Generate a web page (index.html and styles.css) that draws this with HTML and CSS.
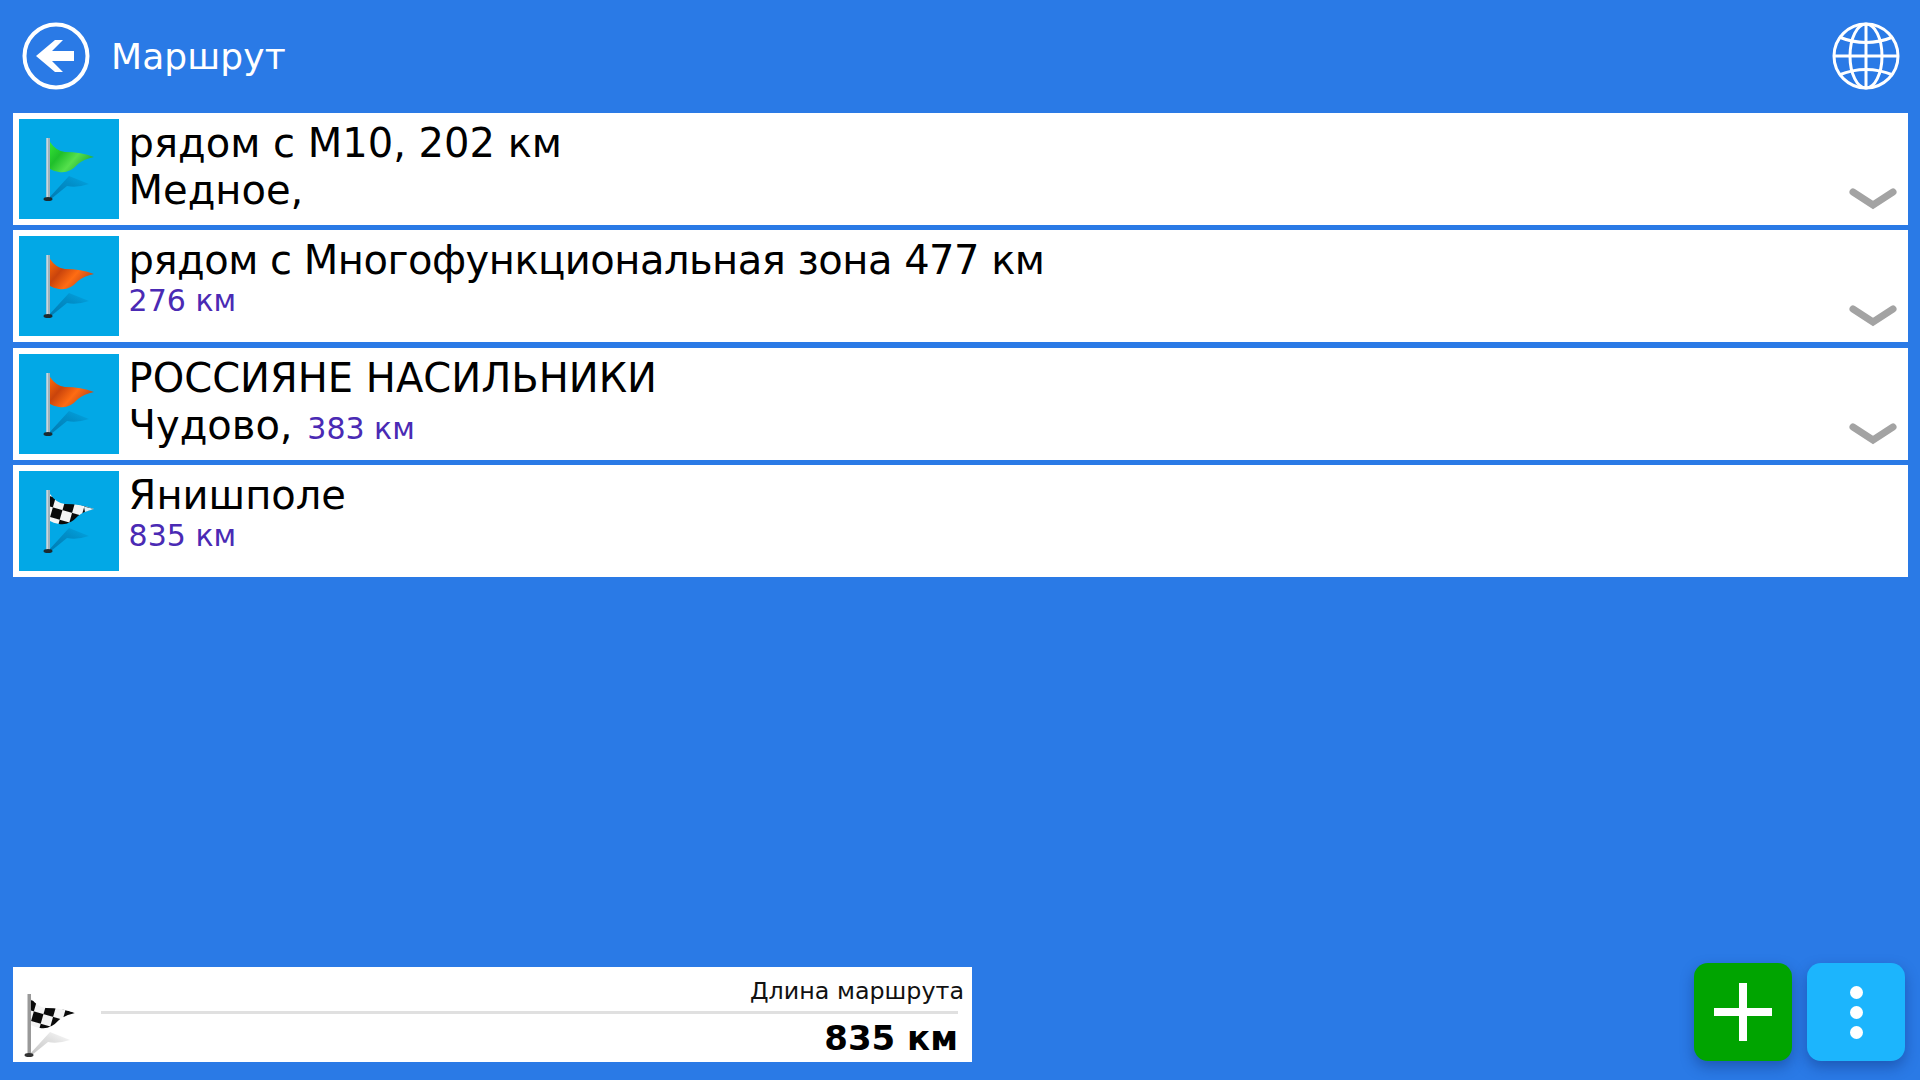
FILE: index.html
```html
<!DOCTYPE html>
<html lang="ru">
<head>
<meta charset="utf-8">
<title>Маршрут</title>
<link rel="stylesheet" href="styles.css">
</head>
<body>
<svg class="defs" width="0" height="0">
  <defs>
    <linearGradient id="gGreen" x1="0" y1="0" x2="1" y2="0.6">
      <stop offset="0" stop-color="#35e635"/><stop offset="0.35" stop-color="#1fbf2a"/><stop offset="0.65" stop-color="#55e04c"/><stop offset="1" stop-color="#1fa838"/>
    </linearGradient>
    <linearGradient id="gOrange" x1="0" y1="0" x2="1" y2="0.6">
      <stop offset="0" stop-color="#ff6a08"/><stop offset="0.35" stop-color="#c9440c"/><stop offset="0.65" stop-color="#ff6c12"/><stop offset="1" stop-color="#b8451c"/>
    </linearGradient>
    <pattern id="pCheck" width="20" height="20" patternUnits="userSpaceOnUse" patternTransform="translate(27 24) rotate(16)">
      <rect width="20" height="20" fill="#f4f4f4"/>
      <rect width="10" height="10" fill="#0a0a0a"/>
      <rect x="10" y="10" width="10" height="10" fill="#0a0a0a"/>
    </pattern>
    <linearGradient id="gShadow" x1="0" y1="1" x2="1" y2="0">
      <stop offset="0" stop-color="#00689c" stop-opacity="0.7"/><stop offset="0.6" stop-color="#00689c" stop-opacity="0.4"/><stop offset="1" stop-color="#00689c" stop-opacity="0.02"/>
    </linearGradient>
    <linearGradient id="gShadowGrey" x1="0" y1="1" x2="1" y2="0">
      <stop offset="0" stop-color="#aaa" stop-opacity="0.7"/><stop offset="0.6" stop-color="#bbb" stop-opacity="0.45"/><stop offset="1" stop-color="#bbb" stop-opacity="0.02"/>
    </linearGradient>
    <symbol id="pole" viewBox="0 0 100 100">
      <rect x="27.500" y="19" width="3.500" height="61" fill="#9fb2bd"/>
      <rect x="27.500" y="19" width="1.200" height="61" fill="#dfe6ea"/>
      <ellipse cx="29" cy="80" rx="4.500" ry="2" fill="#1c2a30"/>
    </symbol>
  </defs>
</svg>

<div class="app">
  <header class="topbar">
    <div class="title-group">
      <svg class="back-icon" viewBox="0 0 68 68">
        <circle cx="34" cy="34" r="31.500" fill="none" stroke="#fff" stroke-width="4"/>
        <path d="M14 34 L33 18 L41 18 L30 29 L52 29 L52 39 L30 39 L41 50 L33 50 Z" fill="#fff"/>
      </svg>
      <span class="title">Маршрут</span>
    </div>
    <svg class="globe-icon" viewBox="0 0 68 68" fill="none" stroke="#fff" stroke-width="3">
      <circle cx="34" cy="34" r="32"/>
      <ellipse cx="34" cy="34" rx="16" ry="32"/>
      <path d="M34 2V66M2 34H66"/>
      <path d="M7 15Q34 26 61 15M7 53Q34 42 61 53"/>
    </svg>
  </header>

  <main class="route-list">
    <article class="route-row">
      <div class="tile">
        <svg class="flag" viewBox="0 0 100 100">
          <path d="M29 80 L50 57 Q60 61 70 65 Q58 69 48 67 L32 80Z" fill="url(#gShadow)"/>
          <use href="#pole"/>
          <path d="M31 23 Q37 32 46 33 Q62 33 75 38 Q65 40 59 45 Q50 55 40 53 Q34 52 31 50 Z" fill="url(#gGreen)"/>
        </svg>
      </div>
      <div class="row-text">
        <div class="line-main">рядом с М10, 202 км</div>
        <div class="line-main">Медное,</div>
      </div>
      <svg class="chevron" viewBox="0 0 48 24"><path d="M4 5 L24 18 L44 5" fill="none" stroke="#a3a3a3" stroke-width="7" stroke-linecap="round"/></svg>
    </article>

    <article class="route-row">
      <div class="tile">
        <svg class="flag" viewBox="0 0 100 100">
          <path d="M29 80 L50 57 Q60 61 70 65 Q58 69 48 67 L32 80Z" fill="url(#gShadow)"/>
          <use href="#pole"/>
          <path d="M31 23 Q37 32 46 33 Q62 33 75 38 Q65 40 59 45 Q50 55 40 53 Q34 52 31 50 Z" fill="url(#gOrange)"/>
        </svg>
      </div>
      <div class="row-text">
        <div class="line-main line-long">рядом с Многофункциональная зона 477 км</div>
        <div class="line-dist">276 км</div>
      </div>
      <svg class="chevron" viewBox="0 0 48 24"><path d="M4 5 L24 18 L44 5" fill="none" stroke="#a3a3a3" stroke-width="7" stroke-linecap="round"/></svg>
    </article>

    <article class="route-row">
      <div class="tile">
        <svg class="flag" viewBox="0 0 100 100">
          <path d="M29 80 L50 57 Q60 61 70 65 Q58 69 48 67 L32 80Z" fill="url(#gShadow)"/>
          <use href="#pole"/>
          <path d="M31 23 Q37 32 46 33 Q62 33 75 38 Q65 40 59 45 Q50 55 40 53 Q34 52 31 50 Z" fill="url(#gOrange)"/>
        </svg>
      </div>
      <div class="row-text">
        <div class="line-main">РОССИЯНЕ НАСИЛЬНИКИ</div>
        <div class="line-main">Чудово, <span class="inline-dist">383 км</span></div>
      </div>
      <svg class="chevron" viewBox="0 0 48 24"><path d="M4 5 L24 18 L44 5" fill="none" stroke="#a3a3a3" stroke-width="7" stroke-linecap="round"/></svg>
    </article>

    <article class="route-row">
      <div class="tile">
        <svg class="flag" viewBox="0 0 100 100">
          <path d="M29 80 L50 57 Q60 61 70 65 Q58 69 48 67 L32 80Z" fill="url(#gShadow)"/>
          <use href="#pole"/>
          <path d="M31 23 Q37 32 46 33 Q62 33 75 38 Q65 40 59 45 Q50 55 40 53 Q34 52 31 50 Z" fill="url(#pCheck)"/>
          <path d="M65 35.500 Q70 36.500 75 38 Q70 39.500 66 41Z" fill="#dff3fb"/>
        </svg>
      </div>
      <div class="row-text">
        <div class="line-main">Янишполе</div>
        <div class="line-dist">835 км</div>
      </div>
    </article>
  </main>

  <footer class="bottom">
    <section class="summary">
      <svg class="summary-flag" viewBox="13 7 62 80">
        <path d="M29 80 L50 57 Q60 61 70 65 Q58 69 48 67 L32 80Z" fill="url(#gShadowGrey)"/>
        <rect x="27.500" y="19" width="3.500" height="61" fill="#999"/>
        <ellipse cx="29" cy="80" rx="4.500" ry="2" fill="#333"/>
        <path d="M31 23 Q37 32 46 33 Q62 33 75 38 Q65 40 59 45 Q50 55 40 53 Q34 52 31 50 Z" fill="url(#pCheck)"/>
      </svg>
      <div class="summary-body">
        <div class="summary-label">Длина маршрута</div>
        <div class="summary-line"></div>
        <div class="summary-value">835 км</div>
      </div>
    </section>
    <div class="actions">
      <button class="action action-add" type="button" aria-label="Добавить">
        <svg viewBox="0 0 58 58" class="action-icon"><path d="M25 0H33V25H58V33H33V58H25V33H0V25H25Z" fill="#fff"/></svg>
      </button>
      <button class="action action-more" type="button" aria-label="Меню">
        <span class="dot"></span><span class="dot"></span><span class="dot"></span>
      </button>
    </div>
  </footer>
</div>
</body>
</html>
```

FILE: styles.css
```css
html, body {
  margin: 0;
  height: 100%;
}
body {
  background: #2a7ae6;
  font-family: "DejaVu Sans", sans-serif;
  overflow: hidden;
}
.defs {
  position: absolute;
}
.app {
  display: flex;
  flex-direction: column;
  height: 1080px;
  box-sizing: border-box;
}
.topbar {
  height: 113px;
  flex: none;
  display: flex;
  align-items: center;
  justify-content: space-between;
  padding: 0 20px 2px 22px;
  box-sizing: border-box;
}
.title-group {
  display: flex;
  align-items: center;
  gap: 21px;
}
.back-icon, .globe-icon {
  width: 68px;
  height: 68px;
  display: block;
}
.title {
  color: #fff;
  font-size: 36px;
  letter-spacing: 0.1px;
  padding-top: 2px;
}
.route-list {
  display: flex;
  flex-direction: column;
  gap: 5.33px;
  margin: 0 12px 0 12.6px;
}
.route-row {
  height: 112px;
  background: #fff;
  display: flex;
  align-items: flex-start;
  padding: 6px 11px 6px 6px;
  box-sizing: border-box;
}
.tile {
  width: 100px;
  height: 100px;
  background: #02a8e6;
  flex: none;
}
.flag {
  width: 100px;
  height: 100px;
  display: block;
}
.row-text {
  flex: 1;
  min-width: 0;
  padding: 1px 0 0 10px;
  color: #000;
}
.line-main {
  font-size: 40px;
  line-height: 47px;
  white-space: nowrap;
}
.line-long {
  letter-spacing: -0.5px;
}
.line-dist {
  font-size: 30px;
  line-height: 33px;
  color: #4a2ab4;
}
.inline-dist {
  font-size: 30px;
  color: #4a2ab4;
  margin-left: 2px;
}
.chevron {
  width: 48px;
  height: 24px;
  align-self: flex-end;
  margin-bottom: 8px;
  flex: none;
}
.bottom {
  margin-top: auto;
  display: flex;
  justify-content: space-between;
  align-items: flex-start;
  padding: 0 15px 18px 12.6px;
}
.summary {
  width: 959.4px;
  height: 95px;
  margin-top: 4px;
  background: #fff;
  display: flex;
  box-sizing: border-box;
  padding: 0 8px 0 0;
}
.summary-flag {
  width: 62px;
  height: 80px;
  margin-top: 15px;
  flex: none;
}
.summary-body {
  flex: 1;
  min-width: 0;
  padding-left: 26px;
  display: flex;
  flex-direction: column;
  align-items: flex-end;
}
.summary-label {
  font-size: 23.8px;
  line-height: 28px;
  margin-top: 10px;
  color: #111;
}
.summary-line {
  width: calc(100% - 6px);
  align-self: flex-start;
  height: 3px;
  background: #e0e0e0;
  margin-top: 6px;
}
.summary-value {
  font-size: 34px;
  line-height: 40px;
  font-weight: bold;
  margin-top: 4px;
  margin-right: 6px;
  color: #000;
}
.actions {
  display: flex;
  gap: 15px;
}
.action {
  width: 98px;
  height: 98px;
  border: 0;
  padding: 0;
  border-radius: 14px;
  display: flex;
  align-items: center;
  justify-content: center;
  box-shadow: 0 6px 14px rgba(10, 40, 110, 0.4);
}
.action-add {
  background: #00a400;
}
.action-more {
  background: #1cb5fd;
  flex-direction: column;
  gap: 7px;
}
.action-icon {
  width: 58px;
  height: 58px;
  display: block;
}
.dot {
  width: 13px;
  height: 13px;
  border-radius: 50%;
  background: #fff;
}
```
